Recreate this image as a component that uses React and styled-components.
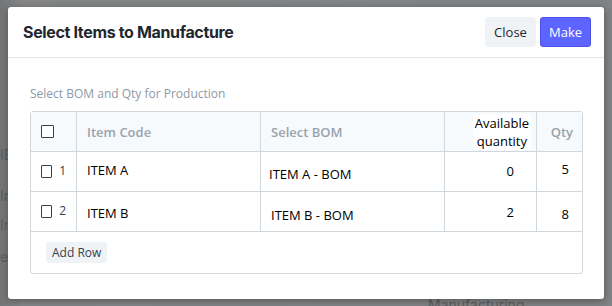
import React from "react"
import styled, { createGlobalStyle } from "styled-components"

const Global = createGlobalStyle`
  html, body {
    margin: 0;
    padding: 0;
    width: 612px;
    height: 306px;
    overflow: hidden;
    background: #7e7f80;
    font-family: Inter, "Noto Sans", sans-serif;
  }
`

const Backdrop = styled.div`
  position: relative;
  width: 612px;
  height: 306px;
  background: linear-gradient(90deg, #747576 0, #858687 22px, #828384 100%);
  padding-top: 7px;
  box-sizing: border-box;
`

const Ghost = styled.span`
  position: absolute;
  font-size: 14px;
  color: #5d5f63;
  left: ${p => p.x}px;
  top: ${p => p.y}px;
`

const Modal = styled.div`
  position: relative;
  margin-left: 8px;
  width: 596px;
  height: 292px;
  background: #fff;
  border-radius: 3px;
  box-shadow: 0 2px 8px rgba(0, 0, 0, 0.35);
  display: flex;
  flex-direction: column;
`

const Header = styled.div`
  height: 50px;
  display: flex;
  align-items: center;
  justify-content: space-between;
  padding: 0 13px 0 15px;
  border-bottom: 1px solid #e2e6e9;
`

const Title = styled.h3`
  margin: 0;
  font-size: 16px;
  font-weight: 700;
  color: #1f272e;
  letter-spacing: -0.35px;
`

const Actions = styled.div`
  display: flex;
  gap: 4px;
`

const Button = styled.button`
  height: 30px;
  width: 51px;
  border: none;
  border-radius: 4px;
  font-family: "Open Sans", sans-serif;
  font-size: 13px;
  background: ${p => (p.primary ? "#5e64ff" : "#f0f3f6")};
  color: ${p => (p.primary ? "#fff" : "#1f272e")};
  box-shadow: ${p => (p.primary ? "inset 0 0 0 1px #4b50e6" : "none")};
  padding: 0;
`

const Body = styled.div`
  padding: 27px 21px 0 22px;
`

const Label = styled.div`
  font-family: "Open Sans", sans-serif;
  font-size: 12px;
  color: #8d99a6;
  height: 17px;
  margin-bottom: 9px;
`

const Grid = styled.div`
  border: 1px solid #d1d8dd;
  border-radius: 3px;
  width: 553px;
  box-sizing: border-box;
`

const Row = styled.div`
  display: grid;
  grid-template-columns: 46px 184px 184px 92px 45px;
  height: 40px;
  border-bottom: 1px solid #d1d8dd;
  background: ${p => (p.head ? "#f7fafc" : "#fff")};
  box-sizing: border-box;
`

const Cell = styled.div`
  display: flex;
  align-items: center;
  justify-content: ${p => (p.right ? "flex-end" : "flex-start")};
  padding: ${p => p.pad || "0 10px"};
  border-right: ${p => (p.last ? "none" : "1px solid #d1d8dd")};
  font-family: "Open Sans", sans-serif;
  font-size: 13px;
  color: #000;
  box-sizing: border-box;
`

const Value = styled.span`
  transform: translateY(${p => p.dy || 0}px);
`

const HeadText = styled.span`
  font-family: "Open Sans", sans-serif;
  font-weight: 600;
  font-size: 13px;
  color: #98a3ae;
`

const Avail = styled.span`
  background: #fff;
  line-height: 18px;
  text-align: center;
  font-size: 13px;
  color: #000;
  padding: 0 2px;
`

const Box = styled.span`
  width: 11px;
  height: 11px;
  border: 1px solid #36414c;
  border-radius: 1px;
  background: #fff;
  display: inline-block;
`

const Num = styled.span`
  font-size: 12px;
  color: #36414c;
  margin-left: 7px;
  margin-top: -2px;
`

const Footer = styled.div`
  height: 41px;
  display: flex;
  align-items: center;
  padding-left: 15px;
`

const SmallButton = styled.button`
  height: 21px;
  padding: 0 6px;
  border: none;
  border-radius: 3px;
  background: #f0f3f6;
  font-family: "Open Sans", sans-serif;
  font-size: 12px;
  color: #36414c;
`

const rows = [
  { idx: 1, code: "ITEM A", bom: "ITEM A - BOM", avail: 0, qty: 5, dy: [-2, 2, -1, -3], bomPad: 8 },
  { idx: 2, code: "ITEM B", bom: "ITEM B - BOM", avail: 2, qty: 8, dy: [1, 3, 0, 2], bomPad: 10 },
]

const App = () => {
  return (
    <>
      <Global />
      <Backdrop>
        <Ghost x={0} y={146}>IB</Ghost>
        <Ghost x={0} y={187}>In</Ghost>
        <Ghost x={0} y={216}>In</Ghost>
        <Ghost x={0} y={248}>er</Ghost>
        <Ghost x={428} y={296}>Manufacturing</Ghost>
        <Modal>
          <Header>
            <Title>Select Items to Manufacture</Title>
            <Actions>
              <Button>Close</Button>
              <Button primary>Make</Button>
            </Actions>
          </Header>
          <Body>
            <Label>Select BOM and Qty for Production</Label>
            <Grid>
              <Row head>
                <Cell>
                  <Box />
                </Cell>
                <Cell>
                  <HeadText>Item Code</HeadText>
                </Cell>
                <Cell>
                  <HeadText>Select BOM</HeadText>
                </Cell>
                <Cell right pad="0 5px 0 0">
                  <Avail>
                    Available
                    <br />
                    quantity
                  </Avail>
                </Cell>
                <Cell right last pad="0 9px 0 0">
                  <HeadText>Qty</HeadText>
                </Cell>
              </Row>
              {rows.map(r => (
                <Row key={r.idx}>
                  <Cell>
                    <Box />
                    <Num>{r.idx}</Num>
                  </Cell>
                  <Cell pad="0 10px">
                    <Value dy={r.dy[0]}>{r.code}</Value>
                  </Cell>
                  <Cell pad={`0 10px 0 ${r.bomPad}px`}>
                    <Value dy={r.dy[1]}>{r.bom}</Value>
                  </Cell>
                  <Cell right pad="0 22px 0 0">
                    <Value dy={r.dy[2]}>{r.avail}</Value>
                  </Cell>
                  <Cell right last pad="0 13px 0 0">
                    <Value dy={r.dy[3]}>{r.qty}</Value>
                  </Cell>
                </Row>
              ))}
              <Footer>
                <SmallButton>Add Row</SmallButton>
              </Footer>
            </Grid>
          </Body>
        </Modal>
      </Backdrop>
    </>
  )
}

export default App
